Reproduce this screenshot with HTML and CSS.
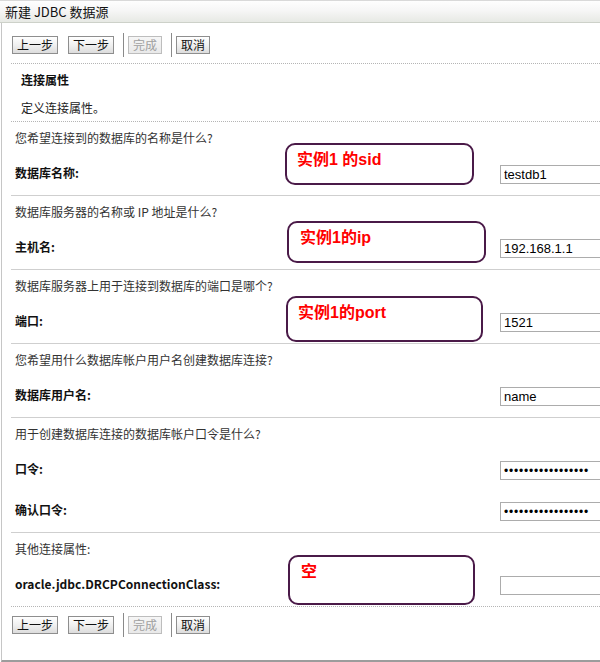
FILE: index.html
```html
<!DOCTYPE html>
<html lang="zh-CN">
<head>
<meta charset="utf-8">
<title>新建 JDBC 数据源</title>
<link rel="stylesheet" href="styles.css">
</head>
<body>
<div class="window">
  <div class="titlebar">新建 JDBC 数据源</div>
  <div class="panel">
    <div class="inner">
      <div class="toolbar">
        <button class="btn">上一步</button>
        <button class="btn next">下一步</button>
        <span class="sep"></span>
        <button class="btn" disabled>完成</button>
        <span class="sep"></span>
        <button class="btn">取消</button>
      </div>
      <div class="header">
        <div class="heading">连接属性</div>
        <div class="desc">定义连接属性。</div>
      </div>
      <div class="group first">
        <div class="question">您希望连接到的数据库的名称是什么?</div>
        <div class="row"><label class="label">数据库名称:</label><input class="field" type="text" value="testdb1"></div>
      </div>
      <div class="group">
        <div class="question">数据库服务器的名称或 IP 地址是什么?</div>
        <div class="row"><label class="label">主机名:</label><input class="field" type="text" value="192.168.1.1"></div>
      </div>
      <div class="group">
        <div class="question">数据库服务器上用于连接到数据库的端口是哪个?</div>
        <div class="row"><label class="label">端口:</label><input class="field" type="text" value="1521"></div>
      </div>
      <div class="group">
        <div class="question">您希望用什么数据库帐户用户名创建数据库连接?</div>
        <div class="row"><label class="label">数据库用户名:</label><input class="field" type="text" value="name"></div>
      </div>
      <div class="group">
        <div class="question">用于创建数据库连接的数据库帐户口令是什么?</div>
        <div class="row"><label class="label">口令:</label><input class="field pw" type="text" value="•••••••••••••••••"></div>
        <div class="row second"><label class="label">确认口令:</label><input class="field pw" type="text" value="•••••••••••••••••"></div>
      </div>
      <div class="group last">
        <div class="question">其他连接属性:</div>
        <div class="row"><label class="label">oracle.jdbc.DRCPConnectionClass:</label><input class="field" type="text" value=""></div>
      </div>
      <div class="toolbar bottom">
        <button class="btn">上一步</button>
        <button class="btn next">下一步</button>
        <span class="sep"></span>
        <button class="btn" disabled>完成</button>
        <span class="sep"></span>
        <button class="btn">取消</button>
      </div>
    </div>
  </div>
  <div class="note n1">实例1 的sid</div>
  <div class="note n2">实例1的ip</div>
  <div class="note n3">实例1的port</div>
  <div class="note n4">空</div>
</div>
</body>
</html>
```
FILE: styles.css
```css
* { box-sizing: border-box; }
html, body { margin: 0; padding: 0; background: #fff; }
body {
  font-family: "Noto Sans CJK SC", "Noto Sans", sans-serif;
  font-size: 12px;
  color: #222;
}
.window {
  position: relative;
  width: 600px;
  height: 662px;
  overflow: hidden;
  display: flex;
  flex-direction: column;
}
.titlebar {
  flex: none;
  height: 23px;
  border-top: 1px solid #d9d9d9;
  border-bottom: 1px solid #cdd1c9;
  background: linear-gradient(#fefefe, #f6f6f6 45%, #e7e9e4);
  padding-left: 5px;
  font-size: 13px;
  line-height: 21px;
  color: #111;
  white-space: nowrap;
}
.panel {
  flex: 1;
  margin-left: 1px;
  border-left: 1px solid #c6c6c6;
  border-bottom: 2px solid #9c9c9c;
}
.inner { margin-left: 9px; }
.toolbar {
  display: flex;
  align-items: center;
  padding: 10px 0 6px 1px;
}
.toolbar.bottom { padding-top: 6px; }
.btn {
  height: 18px;
  padding: 0 4px;
  margin: 0;
  border: 1px solid #8e8e8e;
  border-radius: 0;
  background: linear-gradient(#ffffff, #f0f0f0 50%, #dcdcdc);
  font-family: "Noto Sans CJK SC", sans-serif;
  font-size: 12px;
  line-height: 16px;
  color: #111;
}
.btn.next { margin-left: 10px; }
.btn:disabled {
  color: #a0a0a0;
  border-color: #bdbdbd;
  background: linear-gradient(#f6f6f6, #e9e9e9);
}
.sep {
  width: 1px;
  height: 24px;
  background: #8a8a8a;
  margin: 0 4px 0 9px;
}
.header {
  border-top: 1px dotted #b5b5b5;
  padding: 0 0 5px 10px;
}
.heading {
  margin-top: 8px;
  line-height: 16px;
  font-weight: bold;
  color: #111;
}
.desc {
  margin-top: 12px;
  line-height: 16px;
  color: #222;
}
.group {
  border-top: 1px solid #cfcfcf;
  padding: 0 0 11px 4px;
}
.group.first { border-top: 1px dotted #b5b5b5; }
.group.last { border-bottom: 1px dotted #b5b5b5; }
.question {
  margin-top: 8px;
  line-height: 16px;
  color: #333;
  white-space: nowrap;
}
.row {
  display: flex;
  align-items: center;
  margin-top: 19px;
  height: 19px;
}
.row.second { margin-top: 22px; }
.label {
  flex: none;
  width: 485px;
  padding-bottom: 3px;
  font-weight: bold;
  color: #111;
  line-height: 16px;
  white-space: nowrap;
}
.field {
  flex: none;
  width: 130px;
  height: 19px;
  margin: 0;
  padding: 0 3px;
  border: 1px solid #acacac;
  border-radius: 0;
  background: #fff;
  font-family: "Liberation Sans", sans-serif;
  font-size: 13px;
  color: #000;
  outline: none;
}
.field.pw { font-size: 12px; letter-spacing: 0.8px; }
.note {
  position: absolute;
  border: 2px solid #4a1a48;
  border-radius: 10px;
  padding: 5px 0 0 10px;
  color: #ff0000;
  font-family: "Liberation Sans", "Noto Sans CJK SC", sans-serif;
  font-weight: bold;
  font-size: 16px;
  line-height: 20px;
  white-space: nowrap;
}
.n1 { left: 285px; top: 143px; width: 189px; height: 42px; }
.n2 { left: 287px; top: 221px; width: 199px; height: 42px; padding-left: 11px; }
.n3 { left: 286px; top: 296px; width: 197px; height: 46px; }
.n4 { left: 288px; top: 555px; width: 187px; height: 50px; padding-left: 11px; }
```
